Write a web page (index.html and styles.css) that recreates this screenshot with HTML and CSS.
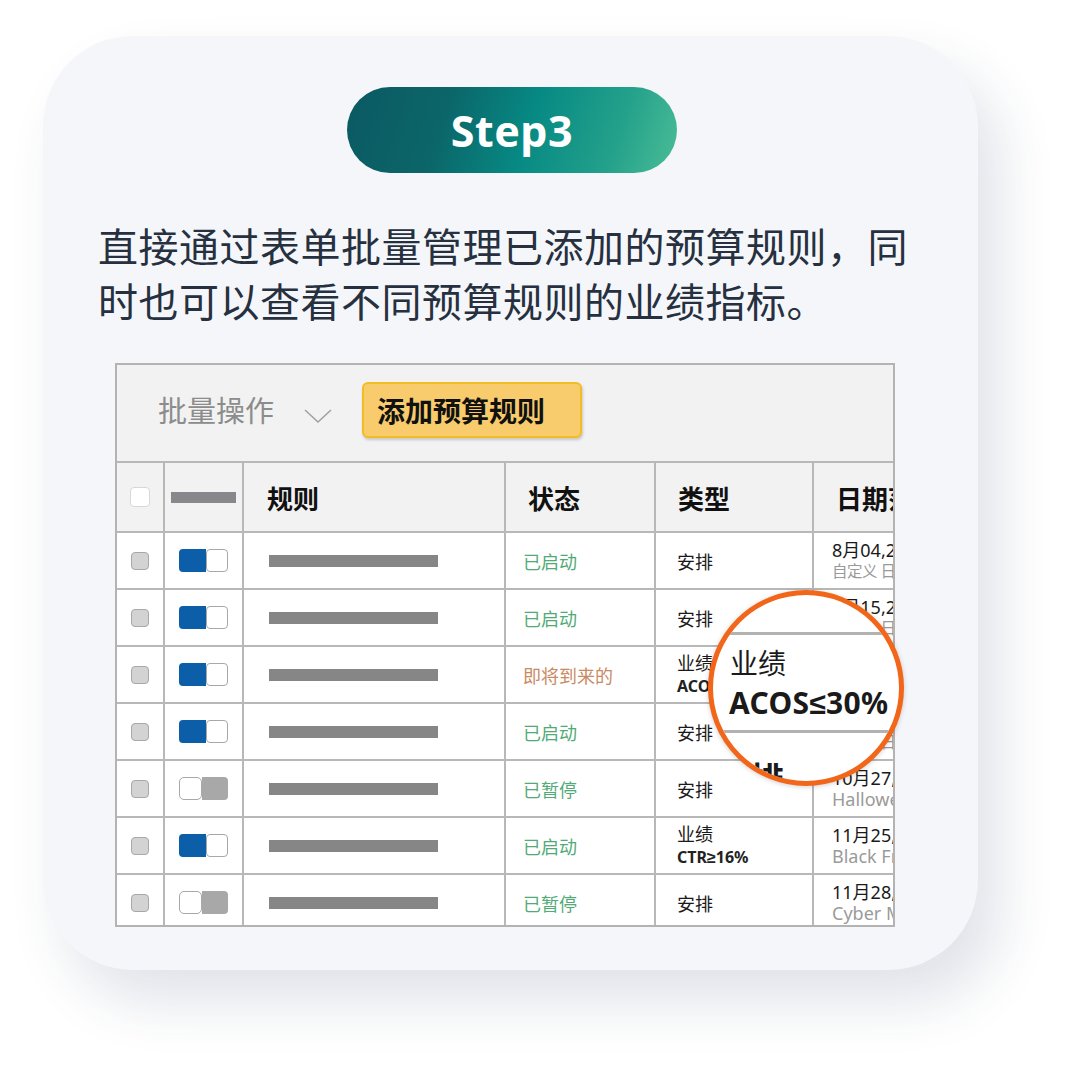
FILE: index.html
```html
<!DOCTYPE html>
<html lang="zh">
<head>
<meta charset="utf-8">
<link rel="stylesheet" href="styles.css">
</head>
<body>
<div class="card">
  <div class="badge">Step3</div>
  <p class="desc">直接通过表单批量管理已添加的预算规则，同<br>时也可以查看不同预算规则的业绩指标。</p>
  <div class="table-wrap">
    <div class="panel">
      <div class="toolbar">
        <span class="bulk">批量操作</span>
        <svg class="chev" width="28" height="16" viewBox="0 0 28 16"><polyline points="1,2 14,14 27,2" fill="none" stroke="#a0a0a0" stroke-width="1.5"/></svg>
        <span class="add-btn">添加预算规则</span>
      </div>
      <div class="row head">
        <div class="cell c1"><span class="hbox"></span></div>
        <div class="cell c2"><span class="hbar"></span></div>
        <div class="cell c3">规则</div>
        <div class="cell c4">状态</div>
        <div class="cell c5">类型</div>
        <div class="cell c6">日期范围</div>
      </div>
      <div class="row">
        <div class="cell c1"><span class="cb"></span></div>
        <div class="cell c2"><span class="tg on"><i></i><b></b></span></div>
        <div class="cell c3"><span class="name"></span></div>
        <div class="cell c4 st-on">已启动</div>
        <div class="cell c5">安排</div>
        <div class="cell c6"><div class="d1">8月04,2019</div><div class="d2 cn">自定义 日期</div></div>
      </div>
      <div class="row">
        <div class="cell c1"><span class="cb"></span></div>
        <div class="cell c2"><span class="tg on"><i></i><b></b></span></div>
        <div class="cell c3"><span class="name"></span></div>
        <div class="cell c4 st-on">已启动</div>
        <div class="cell c5">安排</div>
        <div class="cell c6"><div class="d1">8月15,2019</div><div class="d2 cn">自定义 日期</div></div>
      </div>
      <div class="row">
        <div class="cell c1"><span class="cb"></span></div>
        <div class="cell c2"><span class="tg on"><i></i><b></b></span></div>
        <div class="cell c3"><span class="name"></span></div>
        <div class="cell c4 st-soon">即将到来的</div>
        <div class="cell c5"><div class="t1">业绩</div><div class="t2">ACOS<span class="sym">≤</span>30%</div></div>
        <div class="cell c6"><div class="d1">9月01,2019</div><div class="d2 cn">自定义 日期</div></div>
      </div>
      <div class="row">
        <div class="cell c1"><span class="cb"></span></div>
        <div class="cell c2"><span class="tg on"><i></i><b></b></span></div>
        <div class="cell c3"><span class="name"></span></div>
        <div class="cell c4 st-on">已启动</div>
        <div class="cell c5">安排</div>
        <div class="cell c6"><div class="d1">9月20,2019</div><div class="d2 cn">自定义 日期</div></div>
      </div>
      <div class="row">
        <div class="cell c1"><span class="cb"></span></div>
        <div class="cell c2"><span class="tg off"><i></i><b></b></span></div>
        <div class="cell c3"><span class="name"></span></div>
        <div class="cell c4 st-on">已暂停</div>
        <div class="cell c5">安排</div>
        <div class="cell c6"><div class="d1">10月27,2019</div><div class="d2">Halloween</div></div>
      </div>
      <div class="row">
        <div class="cell c1"><span class="cb"></span></div>
        <div class="cell c2"><span class="tg on"><i></i><b></b></span></div>
        <div class="cell c3"><span class="name"></span></div>
        <div class="cell c4 st-on">已启动</div>
        <div class="cell c5"><div class="t1">业绩</div><div class="t2">CTR<span class="sym">≥</span>16%</div></div>
        <div class="cell c6"><div class="d1">11月25,2019</div><div class="d2">Black Friday</div></div>
      </div>
      <div class="row">
        <div class="cell c1"><span class="cb"></span></div>
        <div class="cell c2"><span class="tg off"><i></i><b></b></span></div>
        <div class="cell c3"><span class="name"></span></div>
        <div class="cell c4 st-on">已暂停</div>
        <div class="cell c5">安排</div>
        <div class="cell c6"><div class="d1">11月28,2019</div><div class="d2">Cyber Monday</div></div>
      </div>
    </div>
    <div class="lens">
      <span class="lens-line l1"></span>
      <span class="lens-t1">业绩</span>
      <span class="lens-t2">ACOS<span class="sym">≤</span>30%</span>
      <span class="lens-line l2"></span>
      <span class="lens-t3">安排</span>
    </div>
  </div>
</div>
</body>
</html>
```
FILE: styles.css
```css
html, body {
  margin: 0;
  padding: 0;
  background: #ffffff;
}
body {
  width: 1080px;
  height: 1080px;
  overflow: hidden;
  font-family: "Noto Sans", "Noto Sans CJK SC", sans-serif;
}
.card {
  margin: 36px 0 0 43px;
  width: 935px;
  height: 934px;
  box-sizing: border-box;
  padding-top: 51px;
  border-radius: 90px;
  background: #f4f6fa;
  box-shadow: 22px 32px 55px rgba(40, 60, 100, 0.14);
  display: flex;
  flex-direction: column;
}
.badge {
  align-self: center;
  margin-left: 3px;
  width: 330px;
  height: 86px;
  border-radius: 43px;
  background: linear-gradient(108deg, #0b5962 0%, #0b6669 30%, #078a84 55%, #24a18b 80%, #4abd96 100%);
  color: #ffffff;
  font-family: "Noto Sans", sans-serif;
  font-weight: 700;
  font-size: 43px;
  letter-spacing: 0.5px;
  display: flex;
  align-items: center;
  justify-content: center;
}
.desc {
  margin: 45px 0 0 55px;
  font-family: "Noto Sans CJK SC", sans-serif;
  font-size: 40px;
  line-height: 55px;
  letter-spacing: 0.5px;
  color: #26303e;
  white-space: nowrap;
}
.table-wrap {
  position: relative;
  margin: 35px 0 0 72px;
  width: 780px;
  height: 564px;
}
.panel {
  width: 780px;
  height: 564px;
  box-sizing: border-box;
  border: 2px solid #b3b3b3;
  background: #ffffff;
  overflow: hidden;
  font-family: "Noto Sans CJK SC", sans-serif;
}
.toolbar {
  height: 96px;
  border-bottom: 2px solid #b8b8b8;
  background: #f2f2f2;
  display: flex;
  align-items: center;
}
.bulk {
  margin-left: 41px;
  font-size: 29px;
  color: #8c8c8c;
  margin-top: -8px;
}
.chev {
  margin-left: 30px;
  margin-top: 6px;
}
.add-btn {
  margin-left: 30px;
  margin-top: -6px;
  width: 220px;
  height: 56px;
  box-sizing: border-box;
  border: 2px solid #f3bd22;
  border-radius: 6px;
  background: #f8cc6c;
  box-shadow: 1px 2px 3px rgba(0, 0, 0, 0.18);
  font-size: 28px;
  font-weight: 700;
  color: #111111;
  padding-left: 13px;
  display: flex;
  align-items: center;
}
.row {
  display: flex;
  height: 55px;
  border-bottom: 2px solid #b8b8b8;
}
.row.head {
  height: 68px;
  background: #f2f2f2;
}
.cell {
  box-sizing: border-box;
  border-right: 2px solid #b8b8b8;
  display: flex;
  flex-direction: column;
  justify-content: center;
  flex: none;
  font-size: 18px;
  color: #1a1a1a;
  white-space: nowrap;
}
.head .cell {
  font-size: 26px;
  font-weight: 700;
  color: #111111;
}
.c1 { width: 48px; align-items: center; }
.c2 { width: 79px; align-items: center; }
.c3 { width: 262px; padding-left: 25px; }
.c4 { width: 150px; padding-left: 17px; }
.c5 { width: 158px; padding-left: 21px; }
.c6 { width: 220px; padding-left: 18px; }
.head .c3 { padding-left: 23px; }
.head .c4 { padding-left: 22px; }
.head .c5 { padding-left: 22px; }
.head .c6 { padding-left: 22px; }
.hbox {
  width: 20px;
  height: 20px;
  box-sizing: border-box;
  border: 1.5px solid #d8d8d8;
  border-radius: 4px;
  background: #ffffff;
}
.hbar {
  width: 65px;
  height: 11px;
  background: #88888c;
}
.cb {
  width: 18px;
  height: 18px;
  box-sizing: border-box;
  border: 1.5px solid #a8a8a8;
  border-radius: 4px;
  background: #d3d3d3;
}
.tg {
  display: flex;
  width: 49px;
  height: 23px;
}
.tg i, .tg b {
  display: block;
  height: 23px;
  box-sizing: border-box;
}
.tg.on i {
  width: 27px;
  background: #0b5ea7;
  border-radius: 4px 0 0 4px;
}
.tg.on b {
  width: 22px;
  background: #ffffff;
  border: 1.5px solid #a8a8a8;
  border-radius: 4px;
}
.tg.off i {
  width: 23px;
  background: #ffffff;
  border: 1.5px solid #a8a8a8;
  border-radius: 5px;
}
.tg.off b {
  width: 26px;
  background: #a8a8a8;
  border-radius: 0 4px 4px 0;
}
.name {
  width: 169px;
  height: 12px;
  background: #868686;
}
.st-on { color: #52ab76; }
.st-soon { color: #c98a63; }
.t1 { line-height: 24px; }
.t2 {
  font-family: "Noto Sans", sans-serif;
  font-weight: 700;
  font-size: 16px;
  line-height: 24px;
  color: #222222;
}
.sym {
  font-family: "Liberation Sans", sans-serif;
}
.d1, .d2 {
  font-family: "Noto Sans", "Noto Sans CJK SC", sans-serif;
  font-size: 18px;
  line-height: 21px;
}
.d1 { color: #1a1a1a; }
.d2 { color: #9a9a9a; }
.d2.cn { font-size: 15.5px; letter-spacing: -0.5px; }
.lens {
  position: absolute;
  left: 593px;
  top: 227px;
  width: 196px;
  height: 196px;
  box-sizing: border-box;
  border: 5px solid #f2661a;
  border-radius: 50%;
  background: #ffffff;
  overflow: hidden;
  box-shadow: 0 1px 5px rgba(0, 0, 0, 0.18);
  font-family: "Noto Sans", "Noto Sans CJK SC", sans-serif;
}
.lens-line {
  position: absolute;
  left: 0;
  width: 100%;
  height: 3px;
  background: #b2b2b2;
}
.l1 { top: 37px; }
.l2 { top: 135px; }
.lens-t1 {
  position: absolute;
  left: 17px;
  top: 50px;
  font-family: "Noto Sans CJK SC", sans-serif;
  font-size: 28px;
  line-height: 34px;
  color: #1a1a1a;
}
.lens-t2 {
  position: absolute;
  left: 16px;
  top: 90px;
  font-size: 30px;
  font-weight: 700;
  letter-spacing: 0.3px;
  line-height: 36px;
  color: #1a1a1a;
  white-space: nowrap;
}
.lens-t3 {
  position: absolute;
  left: 3px;
  top: 165px;
  font-family: "Noto Sans CJK SC", sans-serif;
  font-size: 34px;
  font-weight: 700;
  line-height: 36px;
  color: #1a1a1a;
  white-space: nowrap;
}
```
